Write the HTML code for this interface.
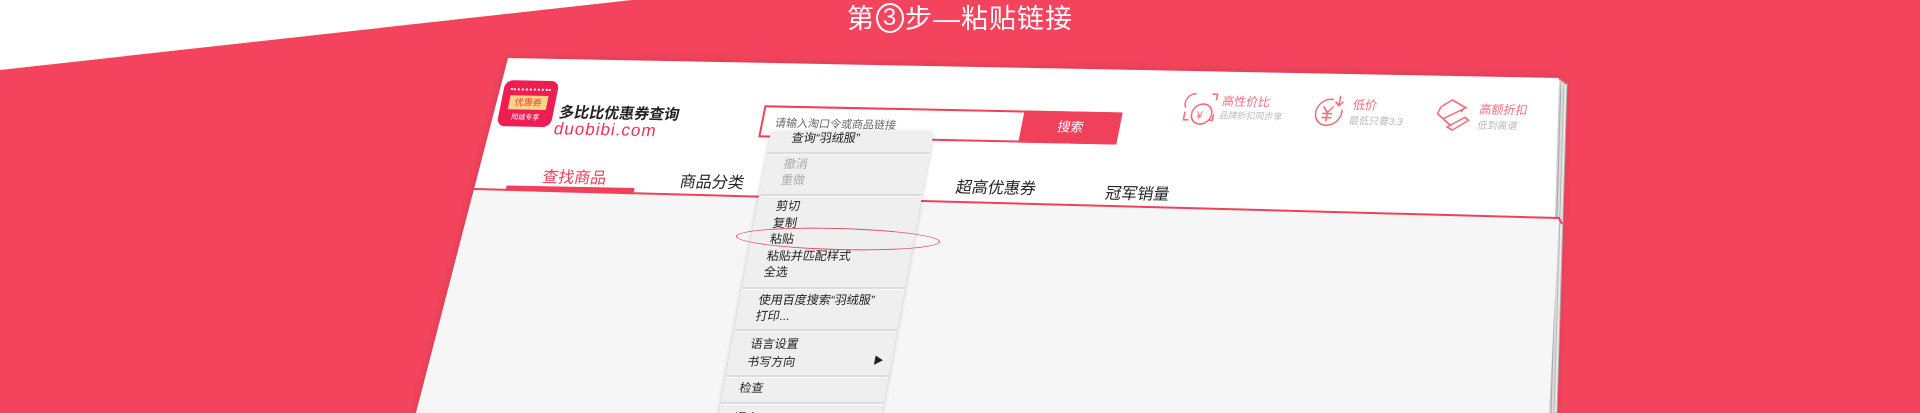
<!DOCTYPE html>
<html style="width:1920px;height:413px;overflow:hidden"><head><meta charset="utf-8"><style>
*{margin:0;padding:0;box-sizing:border-box}
body{width:1920px;height:413px;overflow:hidden;background:#f4445d;position:relative;font-family:"Liberation Sans","Noto Sans CJK SC",sans-serif}
.title{position:absolute;left:0;width:1920px;top:2px;text-align:center;color:#fff;font-size:27px;line-height:34px;letter-spacing:1px}
.c3{display:inline-block;width:28px;height:30px;border:2px solid #fff;border-radius:50%;font-size:24px;line-height:26px;text-align:center;vertical-align:top;margin:1px 1px 0}
.card{position:absolute;left:508px;top:58px;width:1051px;height:140px;transform-origin:0 0;transform:matrix(1,0.02,-0.2,1,0,0)}
.abs{position:absolute;white-space:nowrap}
.menu{position:absolute;left:771px;top:131px;width:163px;height:300px;transform-origin:0 0;transform:matrix(1,0,-0.185,1,0,0);background:#efefef;border-radius:5px 5px 0 0;box-shadow:0 1px 4px rgba(0,0,0,.2);font-size:12px;color:#222}
.menu .t{position:absolute;left:19px;line-height:14px}
.menu .s{position:absolute;left:0;width:100%;height:3px;border-top:2px solid #dcdcdc;border-bottom:1px solid #fafafa}
.dis{color:#aaa}
</style></head><body>
<svg class="abs" style="left:0;top:0" width="1920" height="413">
  <defs><filter id="sh" x="-5%" y="-5%" width="110%" height="120%"><feDropShadow dx="3" dy="4" stdDeviation="6" flood-opacity="0.3"/></filter></defs>
  <polygon points="0,0 632,0 0,70" fill="#fff"/>
  <polygon points="516,62 1567,84 1557,413 424,413" fill="#fff" stroke="#bbb" stroke-width="1"/>
  <polygon points="513,61 1564,82 1554,413 421,413" fill="#fff" stroke="#ccc" stroke-width="1"/>
  <polygon points="510,59 1561,80 1551,413 418,413" fill="#fff" stroke="#ccc" stroke-width="1"/>
  <polygon points="508,58 1559,78 1549,413 416,413" fill="#fff" filter="url(#sh)"/>
  <polygon points="474,189 1559,218 1549,413 416,413" fill="#f6f6f6"/>
  <polyline points="474,189 1559,218 1562,224" fill="none" stroke="#f0405a" stroke-width="2"/>
</svg>
<div class="title">第<span class="c3">3</span>步—粘贴链接</div>

<div class="card">
  <div class="abs" style="left:2px;top:22px;width:54px;height:46px;background:#ee1e54;border-radius:8px"></div>
  <div class="abs" style="left:9px;top:30px;width:40px;height:4px;border-top:2px dotted #fff"></div>
  <div class="abs" style="left:10px;top:37px;width:38px;height:14px;background:#fbd38a;color:#e42;font-size:9px;line-height:14px;text-align:center">优惠券</div>
  <div class="abs" style="left:6px;top:54px;width:46px;color:#fff;font-size:7px;text-align:center">同城专享</div>
  <div class="abs" style="left:62px;top:42px;font-size:15px;font-weight:bold;color:#222">多比比优惠券查询</div>
  <div class="abs" style="left:60px;top:60px;font-size:17px;color:#f0325a;letter-spacing:1px">duobibi.com</div>

  <div class="abs" style="left:265px;top:42px;width:358px;height:32px;border:2px solid #f0405a;background:#fff"></div>
  <div class="abs" style="left:279px;top:51px;font-size:11px;color:#666">请输入淘口令或商品链接</div>
  <div class="abs" style="left:525px;top:42px;width:98px;height:32px;background:#f0405a;color:#fff;font-size:13px;line-height:32px;text-align:center">搜索</div>

  <svg class="abs" style="left:681px;top:20px" width="40" height="36" viewBox="0 0 40 36" fill="none" stroke="#f07080" stroke-width="1.6"><path d="M12 2 a9 9 0 0 0 -8 14 M4 20 v8 h5 M28 2 h5 v6 M33 22 v6 h-4"/><circle cx="21" cy="22" r="10"/><text x="16" y="27" font-size="11" fill="#f07080" stroke="none">¥</text></svg>
  <div class="abs" style="left:720px;top:20px;font-size:12px;color:#f07080">高性价比</div>
  <div class="abs" style="left:720px;top:36px;font-size:9px;color:#bbb">品牌折扣同步享</div>

  <svg class="abs" style="left:811px;top:20px" width="36" height="34" viewBox="0 0 36 34" fill="none" stroke="#f07080" stroke-width="1.6"><path d="M20 5 a13 13 0 1 0 10 10 M26 1 v10 M22 7 l4 4 4-4 M11 12 l5 6 5-6 M16 18 v9 M11 19 h10 M11 23 h10"/></svg>
  <div class="abs" style="left:851px;top:21px;font-size:12px;color:#f07080">低价</div>
  <div class="abs" style="left:850px;top:37px;font-size:10px;color:#bbb">最低只要3.3</div>

  <svg class="abs" style="left:935px;top:22px" width="38" height="34" viewBox="0 0 38 34" fill="none" stroke="#f07080" stroke-width="1.6"><path d="M4 8 l10-7 l14 7 l-3 5 M4 8 l-2 7 l16 12 M8 20 l22-12 M14 28 l16-10 l4 3 l-14 10 z"/></svg>
  <div class="abs" style="left:978px;top:23px;font-size:12px;color:#f07080">高额折扣</div>
  <div class="abs" style="left:979px;top:39px;font-size:10px;color:#bbb">低到离谱</div>

  <div class="abs" style="left:58px;top:104px;font-size:16px;color:#f0405a">查找商品</div>
  <div class="abs" style="left:24px;top:127px;width:128px;height:5px;background:#f0405a"></div>
  <div class="abs" style="left:196px;top:106px;font-size:16px;color:#222">商品分类</div>
  <div class="abs" style="left:472px;top:106px;font-size:16px;color:#222">超高优惠券</div>
  <div class="abs" style="left:622px;top:109px;font-size:16px;color:#222">冠军销量</div>
</div>

<div class="menu">
  <div class="t" style="top:0;left:22px">查询“羽绒服”</div>
  <div class="s" style="top:21px"></div>
  <div class="t dis" style="top:26px">撤消</div>
  <div class="t dis" style="top:42px">重做</div>
  <div class="s" style="top:63px"></div>
  <div class="t" style="top:68px">剪切</div>
  <div class="t" style="top:85px">复制</div>
  <div class="t" style="top:101px">粘贴</div>
  <div class="t" style="top:118px">粘贴并匹配样式</div>
  <div class="t" style="top:134px">全选</div>
  <div class="s" style="top:156px"></div>
  <div class="t" style="top:162px">使用百度搜索“羽绒服”</div>
  <div class="t" style="top:178px">打印...</div>
  <div class="s" style="top:198px"></div>
  <div class="t" style="top:206px">语言设置</div>
  <div class="t" style="top:224px">书写方向</div>
  <div class="t" style="top:224px;left:145px;font-size:10px">▶</div>
  <div class="s" style="top:244px"></div>
  <div class="t" style="top:250px;left:16px">检查</div>
  <div class="s" style="top:271px"></div>
  <div class="t" style="top:280px;left:16px">语音</div>
</div>
<div class="abs" style="left:736px;top:228px;width:204px;height:22px;border:1.5px solid #e6485f;border-radius:50%;transform:rotate(1.5deg)"></div>
</body></html>
